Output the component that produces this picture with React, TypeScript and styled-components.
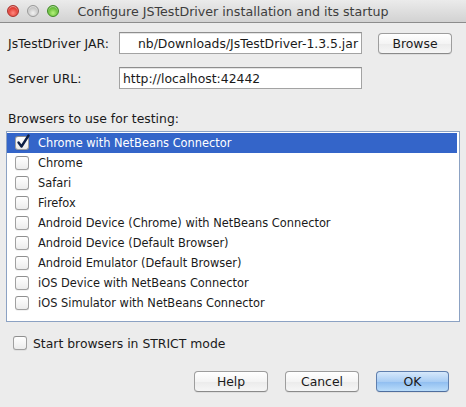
import React from "react";
import styled, { createGlobalStyle } from "styled-components";

const Global = createGlobalStyle`
  html, body { margin: 0; padding: 0; background: #ececec; }
  * { box-sizing: border-box; }
`;

const FONT = `"DejaVu Sans", "Liberation Sans", sans-serif`;

const Window = styled.div`
  width: 466px;
  height: 407px;
  background: #ececec;
  font-family: ${FONT};
  font-size: 12.4px;
  color: #1a1a1a;
  display: flex;
  flex-direction: column;
  overflow: hidden;
`;

const TitleBar = styled.div`
  height: 23px;
  flex: none;
  position: relative;
  display: flex;
  align-items: center;
  justify-content: center;
  background: linear-gradient(#ebebeb, #d2d2d2);
  border-bottom: 1px solid #8c8c8c;
`;

const Lights = styled.div`
  position: absolute;
  left: 7px;
  top: 5px;
  display: flex;
  gap: 8px;
`;

const Light = styled.span<{ $c1: string; $c2: string; $b: string }>`
  width: 12px;
  height: 12px;
  border-radius: 50%;
  border: 1px solid ${(p) => p.$b};
  background: radial-gradient(circle at 50% 70%, ${(p) => p.$c1} 0%, ${(p) => p.$c2} 75%);
  box-shadow: inset 0 1px 1px rgba(255, 255, 255, 0.6);
`;

const Title = styled.div`
  font-size: 12.65px;
  color: #3d3d3d;
  padding-top: 1px;
`;

const Body = styled.div`
  flex: 1;
  display: flex;
  flex-direction: column;
  padding: 9px 6px 0 8px;
`;

const FormGrid = styled.div`
  display: grid;
  grid-template-columns: 111px 243px 91px;
  row-gap: 13px;
  align-items: center;
`;

const Label = styled.div`
  white-space: nowrap;
`;

const Field = styled.div<{ $end?: boolean }>`
  height: 22px;
  background: #fff;
  border: 1px solid #a3a3a3;
  border-top-color: #8e8e8e;
  box-shadow: inset 0 1px 0 #e4e4e4;
  display: flex;
  align-items: center;
  justify-content: ${(p) => (p.$end ? "flex-end" : "flex-start")};
  padding: 0 3px 0 3px;
  overflow: hidden;
  white-space: nowrap;
`;

const Button = styled.div<{ $primary?: boolean; $offset?: number }>`
  width: ${(p) => (p.$primary ? "73px" : "74px")};
  height: 21px;
  margin-left: ${(p) => p.$offset ?? 0}px;
  border-radius: 4px;
  border: 1px solid ${(p) => (p.$primary ? "#5f7fae" : "#9d9d9d")};
  border-bottom-color: ${(p) => (p.$primary ? "#4f6e9e" : "#8a8a8a")};
  background: ${(p) =>
    p.$primary
      ? "linear-gradient(#d6e8fb 0%, #a9cdf4 50%, #8fbdf0 51%, #b9dcfa 100%)"
      : "linear-gradient(#ffffff 0%, #f4f4f4 50%, #ebebeb 51%, #f6f6f6 100%)"};
  display: flex;
  align-items: center;
  justify-content: center;
  font-size: 12.4px;
  color: #1a1a1a;
  box-shadow: 0 1px 0 rgba(0, 0, 0, 0.06);
`;

const SectionLabel = styled.div`
  margin-top: 22px;
  line-height: 15px;
`;

const List = styled.div`
  margin: 5px 0 0 -2px;
  width: 454px;
  height: 191px;
  background: #fff;
  border: 1px solid #8ca2c3;
  padding: 1px 2px 0 0;
  display: flex;
  flex-direction: column;
  font-size: 11.4px;
`;

const Row = styled.div<{ $selected?: boolean }>`
  height: 20px;
  display: flex;
  align-items: center;
  gap: 9px;
  padding-left: 8px;
  background: ${(p) => (p.$selected ? "#3465c9" : "transparent")};
  color: ${(p) => (p.$selected ? "#ffffff" : "#1a1a1a")};
  white-space: nowrap;
`;

const Box = styled.span`
  position: relative;
  width: 14px;
  height: 14px;
  flex: none;
  border-radius: 3px;
  border: 1px solid #a0a0a0;
  border-top-color: #8f8f8f;
  background: linear-gradient(#ffffff, #ececec);
  box-shadow: 0 1px 0 rgba(0, 0, 0, 0.05);
`;

const Check = styled.svg`
  position: absolute;
  left: 0px;
  top: -3px;
  overflow: visible;
`;

const StrictRow = styled.div`
  margin-top: 14px;
  display: flex;
  align-items: center;
  gap: 6px;
  padding-left: 5px;
  height: 14px;
`;

const Buttons = styled.div`
  margin-top: 21px;
  display: flex;
  justify-content: flex-end;
  gap: 17px;
  padding-right: 11px;
`;

const CheckBox: React.FC<{ checked?: boolean }> = ({ checked }) => (
  <Box>
    {checked && (
      <Check width="14" height="16" viewBox="0 0 14 16">
        <path
          d="M2.5 8.5 L5.5 12.5 L12.5 1.5"
          fill="none"
          stroke="#0d1f45"
          strokeWidth="2.4"
          strokeLinecap="round"
          strokeLinejoin="round"
        />
      </Check>
    )}
  </Box>
);

const browsers = [
  "Chrome with NetBeans Connector",
  "Chrome",
  "Safari",
  "Firefox",
  "Android Device (Chrome) with NetBeans Connector",
  "Android Device (Default Browser)",
  "Android Emulator (Default Browser)",
  "iOS Device with NetBeans Connector",
  "iOS Simulator with NetBeans Connector",
];

export default function App() {
  return (
    <>
      <Global />
      <Window>
        <TitleBar>
          <Lights>
            <Light $c1="#ff8a80" $c2="#d8241c" $b="#a8322c" />
            <Light $c1="#f2f2f2" $c2="#bcbcbc" $b="#9a9a9a" />
            <Light $c1="#b6f27c" $c2="#4fae24" $b="#3f8a24" />
          </Lights>
          <Title>Configure JSTestDriver installation and its startup</Title>
        </TitleBar>
        <Body>
          <FormGrid>
            <Label>JsTestDriver JAR:</Label>
            <Field $end>nb/Downloads/JsTestDriver-1.3.5.jar</Field>
            <Button $offset={16}>Browse</Button>
            <Label>Server URL:</Label>
            <Field>http://localhost:42442</Field>
            <span />
          </FormGrid>
          <SectionLabel>Browsers to use for testing:</SectionLabel>
          <List>
            {browsers.map((b, i) => (
              <Row key={b} $selected={i === 0}>
                <CheckBox checked={i === 0} />
                {b}
              </Row>
            ))}
          </List>
          <StrictRow>
            <CheckBox />
            Start browsers in STRICT mode
          </StrictRow>
          <Buttons>
            <Button>Help</Button>
            <Button>Cancel</Button>
            <Button $primary>OK</Button>
          </Buttons>
        </Body>
      </Window>
    </>
  );
}
